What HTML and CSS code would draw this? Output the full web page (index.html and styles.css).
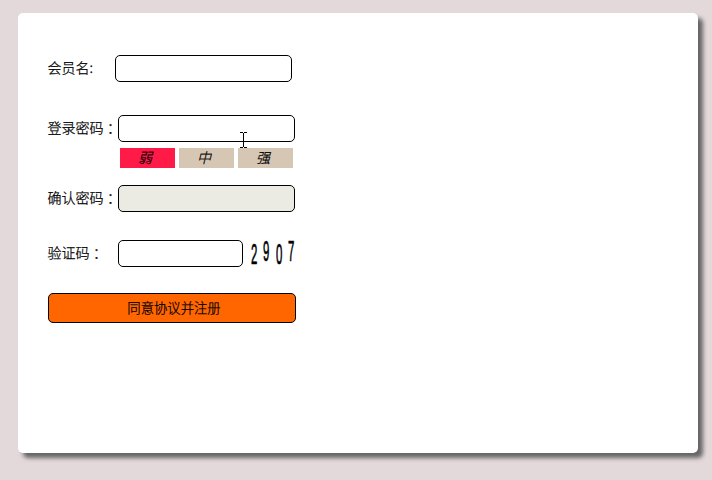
FILE: index.html
```html
<!DOCTYPE html>
<html lang="zh-CN">
<head>
<meta charset="utf-8">
<title>会员注册</title>
<link rel="stylesheet" href="styles.css">
</head>
<body>
<main class="card">
  <form class="form">
    <div class="row row-name">
      <label class="label label-name" for="name">会员名:</label>
      <input class="field" id="name" type="text">
    </div>
    <div class="row row-password">
      <label class="label" for="password">登录密码<span class="colon" lang="zh-TW">：</span></label>
      <div class="field-wrap">
        <input class="field" id="password" type="password">
        <svg class="caret" width="7" height="16" viewBox="0 0 7 16" shape-rendering="crispEdges"><path d="M0 .5h3M4 .5h3M3.5 1v14M0 15.5h3M4 15.5h3" fill="none" stroke="#000"/></svg>
      </div>
    </div>
    <div class="strength">
      <em class="level weak">弱</em>
      <em class="level">中</em>
      <em class="level">强</em>
    </div>
    <div class="row row-confirm">
      <label class="label" for="confirm">确认密码<span class="colon" lang="zh-TW">：</span></label>
      <input class="field" id="confirm" type="password" disabled>
    </div>
    <div class="row row-code">
      <label class="label" for="code">验证码<span class="colon" lang="zh-TW">：</span></label>
      <input class="field field-code" id="code" type="text">
      <div class="captcha"><span class="digit low">2</span><span class="digit">9</span><span class="digit low">0</span><span class="digit">7</span></div>
    </div>
    <button class="submit" type="button">同意协议并注册</button>
  </form>
</main>
</body>
</html>
```
FILE: styles.css
```css
* { box-sizing: border-box; }
body {
  margin: 0;
  padding: 13px 14px 27px 18px;
  height: 480px;
  overflow: hidden;
  background: #e3d9da;
  color: #000;
  font: 300 14px/20px "Noto Sans CJK SC", sans-serif;
  -webkit-text-stroke: .25px #000;
}
.card {
  width: 680px;
  height: 440px;
  padding: 42px 30px 0;
  background: #fff;
  border-radius: 5px;
  box-shadow: 5px 5px 4px #666;
}
.form { width: 248px; }
.row { display: flex; align-items: center; height: 27px; }
.label {
  flex: none;
  width: 70px;
  height: 20px;
  margin-top: -4px;
  line-height: 20px;
  white-space: nowrap;
  text-indent: -.5px;
}
.label-name { width: 67px; }
.colon {
  font-family: "Noto Sans CJK TC", sans-serif;
  line-height: 1;
  vertical-align: -1px;
}
.field {
  display: block;
  flex: none;
  width: 177px;
  height: 27px;
  margin: 0;
  padding: 0 5px;
  border: 1px solid #000;
  border-radius: 5px;
  background: #fff;
}
.field:disabled { background: #ebebe4; }
.field-code { width: 125px; }
.field-wrap { position: relative; }
.caret { position: absolute; left: 122px; top: 17px; }
.row-password { margin-top: 33px; }
.strength { display: flex; gap: 4px; margin: 6px 0 0 72px; }
.level {
  width: 55px;
  height: 20px;
  padding-right: 5px;
  background: #d6c7b5;
  text-align: center;
  line-height: 18px;
}
.weak { background: #ff1a48; }
.row-confirm { margin-top: 17px; }
.row-code { margin-top: 28px; }
.captcha {
  display: flex;
  gap: 6.4px;
  width: 52px;
  height: 27px;
  margin-left: 8px;
}
.digit {
  flex: none;
  width: 6px;
  font: 30px/22px "Liberation Sans", sans-serif;
  -webkit-text-stroke: .7px #000;
  transform: scaleX(.38);
  transform-origin: 0 0;
}
.low { padding-top: 3px; }
.submit {
  display: block;
  width: 248px;
  height: 30px;
  margin-top: 26px;
  padding: 0 0 0 4px;
  border: 1px solid #000;
  border-radius: 5px;
  background: #ff6600;
  color: #000;
  font: 300 13.33px/28px "Noto Sans CJK SC", sans-serif;
}
```
